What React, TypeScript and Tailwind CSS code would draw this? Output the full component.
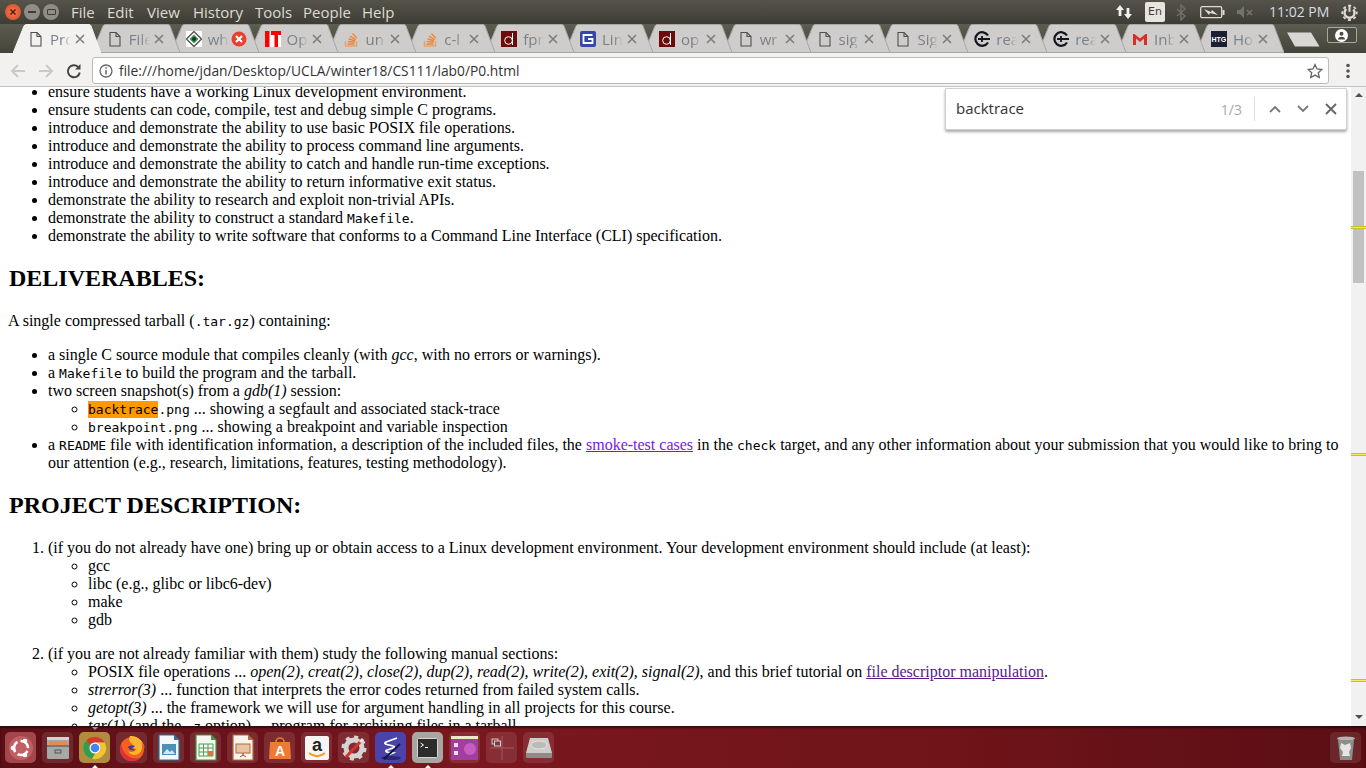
import React from "react";

const Doc = () => (
  <svg width="16" height="16" viewBox="0 0 16 16" fill="none" stroke="#4f4f4f" strokeWidth="1.100">
    <path d="M3 1.500h6l4 4v9.500H3z" />
    <path d="M9 1.500v4h4" />
  </svg>
);
const So = () => (
  <svg width="16" height="16" viewBox="0 0 16 16" fill="none" stroke="#f0883a" strokeWidth="1.500">
    <path d="M2.500 10v5h11v-5" stroke="#e0a679" />
    <path d="M4.500 13h7M4.800 10.500l6.800.8M5.500 7.800l6.500 2.200M7 5.200l5.800 3.600M9.500 2.500l4.300 4.800" />
  </svg>
);
const Wh = () => (
  <svg width="16" height="16" viewBox="0 0 16 16">
    <rect width="16" height="16" fill="#fff" />
    <path d="M8 .5 15.500 8 8 15.500.5 8z" fill="none" stroke="#555" strokeWidth="1.400" />
    <path d="M8 3.500 12.500 8 8 12.500 3.500 8z" fill="#3f8f5a" />
    <circle cx="8" cy="8" r="2" fill="#16391f" />
  </svg>
);
const CrashX = () => (
  <svg width="16" height="16" viewBox="0 0 16 16">
    <circle cx="8" cy="8" r="7.500" fill="#e8412d" />
    <path d="M5 5l6 6M11 5l-6 6" stroke="#fff" strokeWidth="2.200" />
  </svg>
);
const It = () => (
  <svg width="16" height="16" viewBox="0 0 16 16">
    <rect width="16" height="16" fill="#f00" />
    <rect x="4.500" y="0" width="1.500" height="16" fill="#fff" />
    <rect x="6" y="4" width="3.500" height="12" fill="#fff" />
    <rect x="13" y="4" width="3" height="12" fill="#fff" />
  </svg>
);
const Dd = () => (
  <svg width="16" height="16" viewBox="0 0 16 16">
    <rect width="16" height="16" fill="#6d0a0a" />
    <circle cx="7.500" cy="9.500" r="3.800" fill="none" stroke="#fff" strokeWidth="1" />
    <path d="M11.500 2v12" stroke="#fff" strokeWidth="1" />
  </svg>
);
const Lin = () => (
  <svg width="16" height="16" viewBox="0 0 16 16">
    <rect width="16" height="16" rx="2" fill="#3546a8" />
    <path d="M12.500 4h-9v8h9V8H8" fill="none" stroke="#fff" strokeWidth="1.800" />
  </svg>
);
const Rea = () => (
  <svg width="16" height="16" viewBox="0 0 16 16" fill="none" stroke="#15151f">
    <path d="M14 4.500A6.800 6.800 0 1 0 14 11.500" strokeWidth="2.200" />
    <path d="M4 8h12M8 5v6" strokeWidth="1.800" />
  </svg>
);
const Gm = () => (
  <svg width="16" height="16" viewBox="0 0 16 16">
    <path d="M1 3v11h3V7.500L8 11l4-3.500V14h3V3h-1.500L8 7.500 2.500 3z" fill="#d93025" />
  </svg>
);
const Htg = () => (
  <span className="flex h-4 w-4 items-center justify-center bg-[#1a1f33] font-['Liberation_Sans',sans-serif] text-[7px] font-bold leading-none text-white">
    HTG
  </span>
);

const tabs: { t: string; i: React.ReactNode }[] = [
  { t: "Pro", i: <Doc /> },
  { t: "File", i: <Doc /> },
  { t: "wh", i: <Wh /> },
  { t: "Op", i: <It /> },
  { t: "un", i: <So /> },
  { t: "c-l", i: <So /> },
  { t: "fpr", i: <Dd /> },
  { t: "Lin", i: <Lin /> },
  { t: "op", i: <Dd /> },
  { t: "wr", i: <Doc /> },
  { t: "sig", i: <Doc /> },
  { t: "Sig", i: <Doc /> },
  { t: "rea", i: <Rea /> },
  { t: "rea", i: <Rea /> },
  { t: "Inb", i: <Gm /> },
  { t: "Ho", i: <Htg /> },
];

function Tab({ t, i, idx }: { t: string; i: React.ReactNode; idx: number }) {
  const active = idx === 0;
  return (
    <div className="relative -mr-[9.15px] h-[29px] w-[88px] shrink-0" style={{ zIndex: 40 - idx }}>
      <svg className="absolute inset-0" width="88" height="29" viewBox="0 0 88 29">
        <path
          d={active ? "M0 29 L11 2 Q11.800 .5 13.500 .5 L76 .5 Q77.500 .5 78 2 L88 29" : "M0 28.500 L11 2 Q11.800 .5 13.500 .5 L76 .5 Q77.500 .5 78 2 L88 28.500 Z"}
          fill={active ? "#f2f1f0" : "#cfcdcb"}
          stroke={active ? "#f2f1f0" : "#a9a7a4"}
        />
      </svg>
      <div className="relative flex h-full items-center pl-[15px] pt-px">
        <span className="flex h-4 w-4 shrink-0 items-center justify-center">{i}</span>
        <span className="ml-[6px] w-[22px] overflow-hidden whitespace-nowrap text-[15px] leading-[18px] text-[#7a8086] [mask-image:linear-gradient(90deg,#000_55%,transparent_95%)]">
          {t}
        </span>
        {idx === 2 ? (
          <span className="ml-px">
            <CrashX />
          </span>
        ) : (
          <svg className="ml-[3px]" width="10" height="10" viewBox="0 0 10 10" stroke="#7b7b7b" strokeWidth="1.500">
            <path d="M1 1l8 8M9 1l-8 8" />
          </svg>
        )}
      </div>
    </div>
  );
}

const menu: [string, string][] = [
  ["File", "w-[36px]"],
  ["Edit", "w-[40px]"],
  ["View", "w-[46px]"],
  ["History", "w-[62px]"],
  ["Tools", "w-[48px]"],
  ["People", "w-[59px]"],
  ["Help", "w-[40px]"],
];

function Tile({ children, cls = "bg-white/10", pip, top }: { children: React.ReactNode; cls?: string; pip?: boolean; top?: boolean }) {
  return (
    <div className={`relative flex h-[31px] w-[31px] shrink-0 items-center justify-center rounded-[5px] ${cls}`}>
      {children}
      {pip && <span className="absolute -bottom-[5px] left-[13px] h-0 w-0 border-x-[3px] border-b-[3px] border-x-transparent border-b-white" />}
      {top && <span className="absolute -top-[5px] left-[13px] h-0 w-0 border-x-[3px] border-t-[3px] border-x-transparent border-t-[#999]" />}
    </div>
  );
}

const Mono = ({ children }: { children: React.ReactNode }) => (
  <code className="font-['DejaVu_Sans_Mono',monospace] text-[13px] leading-[0]">{children}</code>
);

const Mark = ({ cls }: { cls: string }) => (
  <div className={`absolute left-0 h-[3px] w-[15px] border-y border-[#c9bf1e] bg-[#f5ee5a] ${cls}`} />
);

export default function App() {
  return (
    <div className="flex h-screen w-screen flex-col overflow-hidden bg-white font-['Open_Sans','Noto_Sans',sans-serif]">
      {/* Ubuntu top panel */}
      <div className="flex h-[24px] shrink-0 items-center bg-[linear-gradient(#55534a,#3e3d35)] text-[14px] text-[#dfdbd2]">
        <div className="ml-[5px] flex items-center gap-[3px]">
          <span className="flex h-[16px] w-[16px] items-center justify-center rounded-full bg-[radial-gradient(#f27a53,#d9481d)]">
            <svg width="8" height="8" viewBox="0 0 8 8" stroke="#5a1c08" strokeWidth="1.500"><path d="M1.500 1.500l5 5M6.500 1.500l-5 5" /></svg>
          </span>
          <span className="flex h-[16px] w-[16px] items-center justify-center rounded-full bg-[#8f8d85]">
            <span className="h-[2px] w-[8px] bg-[#3e3d35]" />
          </span>
          <span className="flex h-[16px] w-[16px] items-center justify-center rounded-full bg-[#8f8d85]">
            <span className="h-[6px] w-[9px] rounded-[1px] border border-[#3e3d35]" />
          </span>
        </div>
        <div className="ml-[12px] flex">
          {menu.map(([m, w]) => (
            <span key={m} className={`${w} text-[15px] leading-none`}>{m}</span>
          ))}
        </div>
        <div className="ml-auto flex items-center">
          <svg width="18" height="18" viewBox="0 0 18 18" fill="#f2f1ef">
            <path d="M5 2 1 7h2.600v6h2.800V7H9zM13 16l4-5h-2.600V5h-2.800v6H9z" />
          </svg>
          <span className="ml-[12px] flex h-[20px] w-[20px] items-center justify-center rounded-[2px] bg-[#e8e5e0] font-['DejaVu_Sans',sans-serif] text-[11px] text-[#3c3b37]">En</span>
          <svg className="ml-[11px]" width="11" height="17" viewBox="0 0 11 17" fill="none" stroke="#6f6e66" strokeWidth="1.500">
            <path d="M1 5l8 7-4 4V1l4 4-8 7" />
          </svg>
          <svg className="ml-[13px]" width="25" height="13" viewBox="0 0 25 13">
            <rect x=".7" y=".7" width="21" height="11" rx="1.500" fill="none" stroke="#dfdbd2" strokeWidth="1.300" />
            <rect x="22.500" y="4" width="2" height="5" fill="#dfdbd2" />
            <path d="M4 3l7 3 1-2 6 5-8-2-1 2z" fill="#dfdbd2" />
          </svg>
          <svg className="ml-[12px]" width="17" height="12" viewBox="0 0 17 12" fill="#75746c">
            <path d="M0 4h3l4-4v12L3 8H0z" />
            <path d="M10 4l5 5M15 4l-5 5" stroke="#75746c" strokeWidth="1.500" />
          </svg>
          <span className="ml-[15px] w-[60px] whitespace-nowrap text-[14px] leading-none text-[#d8dde0]">11:02 PM</span>
          <svg className="ml-[12px] mr-[8px]" width="17" height="17" viewBox="0 0 17 17" fill="none" stroke="#dfdbd2">
            <circle cx="8.500" cy="8.800" r="5" strokeWidth="2.400" strokeDasharray="23 8.400" strokeDashoffset="-4.200" transform="rotate(-90 8.500 8.800)" />
            <circle cx="8.500" cy="8.800" r="7.200" strokeWidth="1.800" strokeDasharray="3 2.650" strokeDashoffset="1.500" />
            <path d="M8.500 .8v7" strokeWidth="2" />
          </svg>
        </div>
      </div>

      {/* Tab strip */}
      <div className="flex h-[29px] shrink-0 bg-[linear-gradient(#5d5c50,#45443a)] pl-[13px]">
        {tabs.map((x, idx) => (
          <Tab key={idx} t={x.t} i={x.i} idx={idx} />
        ))}
        <svg className="ml-[12px] mt-[8px] shrink-0" width="33" height="15" viewBox="0 0 33 15">
          <path d="M0 .5h24l8.500 14H8z" fill="#d9d7d4" />
        </svg>
        <div className="ml-[7px] mt-[3px] flex h-[16px] w-[30px] items-center justify-center rounded-[2px] border border-[#a9a89f] bg-[#4c4b41]">
          <svg width="13" height="13" viewBox="0 0 13 13" fill="#fff">
            <circle cx="6.500" cy="6.500" r="6.500" />
            <circle cx="6.500" cy="4.800" r="2" fill="#4c4b41" />
            <path d="M2.800 10.500c.5-2 2-2.700 3.700-2.700s3.200.7 3.700 2.700z" fill="#4c4b41" />
          </svg>
        </div>
      </div>

      {/* Toolbar */}
      <div className="flex h-[34px] shrink-0 items-center border-b border-[#c4c2bf] bg-[#f2f1f0] pb-[2px] pt-[4px]">
        <svg className="ml-[10px]" width="16" height="16" viewBox="0 0 16 16" fill="none" stroke="#cbcac8" strokeWidth="2"><path d="M15 8H2M8 2 2 8l6 6" /></svg>
        <svg className="ml-[12px]" width="16" height="16" viewBox="0 0 16 16" fill="none" stroke="#cbcac8" strokeWidth="2"><path d="M1 8h13M8 2l6 6-6 6" /></svg>
        <svg className="ml-[12px]" width="16" height="16" viewBox="0 0 16 16" fill="none" stroke="#444" strokeWidth="2"><path d="M13.800 9.500A6 6 0 1 1 12 3.800" /><path d="M14.500 1v5.500H9" fill="#444" stroke="none" /></svg>
        <div className="ml-[10px] flex h-[27px] w-[1237px] items-center rounded-[3px] border border-[#bdbbb8] bg-white">
          <svg className="ml-[6px]" width="14" height="14" viewBox="0 0 14 14" fill="none" stroke="#666" strokeWidth="1.300">
            <circle cx="7" cy="7" r="6" />
            <path d="M7 6v4.500M7 3.300v1.400" strokeWidth="1.500" />
          </svg>
          <span className="ml-[6px] whitespace-nowrap text-[13.800px] leading-[18px] text-[#333]">file:///home/jdan/Desktop/UCLA/winter18/CS111/lab0/P0.html</span>
          <svg className="ml-auto mr-[5px]" width="16" height="16" viewBox="0 0 16 16" fill="none" stroke="#666" strokeWidth="1.300">
            <path d="M8 1.500l2 4.400 4.800.6-3.500 3.200.9 4.800L8 12.100l-4.200 2.400.9-4.800L1.200 6.500 6 5.900z" />
          </svg>
        </div>
        <svg className="ml-[17px]" width="4" height="16" viewBox="0 0 4 16" fill="#555">
          <circle cx="2" cy="2.500" r="1.800" /><circle cx="2" cy="8" r="1.800" /><circle cx="2" cy="13.500" r="1.800" />
        </svg>
      </div>

      {/* Page */}
      <div className="relative flex min-h-0 flex-1 overflow-hidden">
        <div className="h-full w-[1351px] shrink-0 overflow-hidden px-2 font-['Liberation_Serif',serif] text-[16px] leading-[18px] text-black">
          <ul className="-mt-[4px] list-disc pl-10">
            <li>ensure students have a working Linux development environment.</li>
            <li>ensure students can code, compile, test and debug simple C programs.</li>
            <li>introduce and demonstrate the ability to use basic POSIX file operations.</li>
            <li>introduce and demonstrate the ability to process command line arguments.</li>
            <li>introduce and demonstrate the ability to catch and handle run-time exceptions.</li>
            <li>introduce and demonstrate the ability to return informative exit status.</li>
            <li>demonstrate the ability to research and exploit non-trivial APIs.</li>
            <li>demonstrate the ability to construct a standard <Mono>Makefile</Mono>.</li>
            <li>demonstrate the ability to write software that conforms to a Command Line Interface (CLI) specification.</li>
          </ul>
          <h2 className="my-[19.920px] ml-px text-[24px] font-bold leading-[27px]">DELIVERABLES:</h2>
          <p className="my-4">A single compressed tarball (<Mono>.tar.gz</Mono>) containing:</p>
          <ul className="my-4 list-disc pl-10">
            <li>a single C source module that compiles cleanly (with <i>gcc</i>, with no errors or warnings).</li>
            <li>a <Mono>Makefile</Mono> to build the program and the tarball.</li>
            <li>two screen snapshot(s) from a <i>gdb(1)</i> session:
              <ul className="list-[circle] pl-10">
                <li><Mono><span className="bg-[#ff9900] py-[1px]">backtrace</span>.png</Mono> ... showing a segfault and associated stack-trace</li>
                <li><Mono>breakpoint.png</Mono> ... showing a breakpoint and variable inspection</li>
              </ul>
            </li>
            <li>a <Mono>README</Mono> file with identification information, a description of the included files, the <a className="text-[#7a16ea] underline">smoke-test cases</a> in the <Mono>check</Mono> target, and any other information about your submission that you would like to bring to our attention (e.g., research, limitations, features, testing methodology).</li>
          </ul>
          <h2 className="my-[19.920px] ml-px text-[24px] font-bold leading-[27px]">PROJECT DESCRIPTION:</h2>
          <ol className="my-4 list-decimal pl-10">
            <li>(if you do not already have one) bring up or obtain access to a Linux development environment. Your development environment should include (at least):
              <ul className="list-[circle] pl-10">
                <li>gcc</li>
                <li>libc (e.g., glibc or libc6-dev)</li>
                <li>make</li>
                <li>gdb</li>
              </ul>
            </li>
            <li className="mt-4">(if you are not already familiar with them) study the following manual sections:
              <ul className="list-[circle] pl-10">
                <li>POSIX file operations ... <i>open(2), creat(2), close(2), dup(2), read(2), write(2), exit(2), signal(2)</i>, and this brief tutorial on <a className="text-[#551a8b] underline">file descriptor manipulation</a>.</li>
                <li><i>strerror(3)</i> ... function that interprets the error codes returned from failed system calls.</li>
                <li><i>getopt(3)</i> ... the framework we will use for argument handling in all projects for this course.</li>
                <li><i>tar(1)</i> (and the <Mono>-z</Mono> option) ... program for archiving files in a tarball.</li>
              </ul>
            </li>
          </ol>
        </div>

        {/* Scrollbar */}
        <div className="relative flex h-full w-[15px] shrink-0 flex-col items-center bg-[#f1f1f1]">
          <span className="mt-[6px] h-0 w-0 border-x-[4px] border-b-[4px] border-x-transparent border-b-[#505050]" />
          <div className="mt-[74px] h-[112px] w-[11px] bg-[#c1c1c1]" />
          <span className="mt-auto mb-[7px] h-0 w-0 border-x-[4px] border-t-[4px] border-x-transparent border-t-[#505050]" />
          <Mark cls="top-[139px]" />
          <Mark cls="top-[366px]" />
          <Mark cls="top-[592px]" />
        </div>

        {/* Find bar */}
        <div className="absolute left-[945px] top-px flex h-[42px] w-[402px] items-center rounded-b-[2px] border border-[#d0d0d0] bg-white pl-[10px] shadow-[0_2px_3px_rgba(0,0,0,0.35)]">
          <span className="pb-[2px] text-[15px] text-[#333]">backtrace</span>
          <span className="ml-auto text-[14px] text-[#a8a8a8]">1/3</span>
          <span className="ml-[12px] h-[24px] w-px bg-[#dedede]" />
          <svg className="ml-[14px]" width="12" height="8" viewBox="0 0 12 8" fill="none" stroke="#777" strokeWidth="1.800"><path d="M1 7l5-5 5 5" /></svg>
          <svg className="ml-[16px]" width="12" height="8" viewBox="0 0 12 8" fill="none" stroke="#777" strokeWidth="1.800"><path d="M1 1l5 5 5-5" /></svg>
          <svg className="ml-[16px] mr-[9px]" width="12" height="12" viewBox="0 0 12 12" fill="none" stroke="#666" strokeWidth="1.900"><path d="M1 1l10 10M11 1L1 11" /></svg>
        </div>
      </div>

      {/* Unity launcher */}
      <div className="relative flex h-[42px] shrink-0 items-start gap-[6px] bg-[linear-gradient(90deg,#5c0f16,#7a171e_35%,#6f1419_70%,#5a0e14)] pl-[5px] pt-[6px] shadow-[inset_0_2px_2px_rgba(0,0,0,0.5)]">
        <Tile cls="bg-[#a4474c]">
          <svg width="26" height="26" viewBox="0 0 26 26">
            <circle cx="13" cy="13" r="12" fill="#c06064" />
            <circle cx="13" cy="13" r="7" fill="none" stroke="#fff" strokeWidth="2.600" strokeDasharray="11.500 3.160" strokeDashoffset="-1.500" transform="rotate(12 13 13)" />
            <circle cx="5" cy="13" r="2.300" fill="#fff" /><circle cx="17" cy="6" r="2.300" fill="#fff" /><circle cx="17" cy="20" r="2.300" fill="#fff" />
          </svg>
        </Tile>
        <Tile>
          <svg width="26" height="26" viewBox="0 0 26 26">
            <rect x="2" y="2" width="22" height="22" rx="1.500" fill="#a8a8a4" />
            <rect x="2" y="2" width="22" height="3" fill="#d5d3cf" />
            <rect x="4" y="6" width="18" height="4" fill="#e88b4a" />
            <rect x="2" y="10" width="22" height="2" fill="#777" />
            <rect x="10" y="15" width="6" height="3" fill="none" stroke="#555" />
          </svg>
        </Tile>
        <Tile cls="bg-[#b08c3e]" pip top>
          <svg width="26" height="26" viewBox="0 0 26 26">
            <path d="M13 2a11 11 0 0 1 9.500 5.500H13a5.500 5.500 0 0 0-5 3L4.500 5.300A11 11 0 0 1 13 2z" fill="#d8382e" />
            <path d="M4.500 5.300 8 10.500a5.500 5.500 0 0 0 5 8l-3 5.200A11 11 0 0 1 4.500 5.300z" fill="#2f9e4f" />
            <path d="M22.500 7.500A11 11 0 0 1 10 23.700l3.300-5.200A5.500 5.500 0 0 0 17.800 10l-4.800-2.500z" fill="#f3c331" />
            <circle cx="13" cy="13" r="5.500" fill="#fff" />
            <circle cx="13" cy="13" r="4.300" fill="#4285f4" />
          </svg>
        </Tile>
        <Tile>
          <svg width="28" height="28" viewBox="0 0 28 28">
            <circle cx="14" cy="15" r="12" fill="#f4611f" />
            <path d="M3 10a12 12 0 0 0 19 14C13 26 5 21 3 10z" fill="#e02f3c" />
            <path d="M12 2c7-1 14 5 15 13-1-3-2-5-4-7 2 5 1 10-3 12-3 2-8 1-10-3 3 2 7 1 8-2-2-2-6-1-7-3 2 0 3-1 4-2-3-1-5-4-3-8z" fill="#ffb52e" />
            <path d="M10 13c2-2 5-2 7-1-1 1-2 2-4 2 1 1 3 1 4 2-2 1-5 1-7-3z" fill="#3d3a96" />
          </svg>
        </Tile>
        <Tile>
          <svg width="24" height="27" viewBox="0 0 24 27">
            <path d="M2 1h15l5 5v20H2z" fill="#f4f6f7" stroke="#2f6f9f" strokeWidth="1.200" />
            <path d="M17 1l5 5h-5z" fill="#2f6f9f" />
            <rect x="5" y="10" width="14" height="11" fill="#4a90b8" />
            <path d="M6 20l4-5 3 3 2-2 3 4z" fill="#d9e6ee" />
          </svg>
        </Tile>
        <Tile>
          <svg width="24" height="27" viewBox="0 0 24 27">
            <path d="M2 1h15l5 5v20H2z" fill="#f4f7f2" stroke="#3e9a45" strokeWidth="1.200" />
            <path d="M17 1l5 5h-5z" fill="#3e9a45" />
            <path d="M5 10h14v12H5zM5 14h14M5 18h14M9.500 10v12M14 10v12" fill="none" stroke="#4ea155" />
            <rect x="14" y="17" width="5" height="5" fill="#d27a3c" />
          </svg>
        </Tile>
        <Tile>
          <svg width="24" height="27" viewBox="0 0 24 27">
            <path d="M2 1h15l5 5v20H2z" fill="#f8f3ef" stroke="#b56a3a" strokeWidth="1.200" />
            <path d="M17 1l5 5h-5z" fill="#b56a3a" />
            <rect x="5" y="10" width="14" height="9" fill="#e9c3a6" stroke="#b56a3a" />
            <path d="M12 19v3M9 23l3-2 3 2" stroke="#8a5a3a" fill="none" />
          </svg>
        </Tile>
        <Tile>
          <svg width="26" height="26" viewBox="0 0 26 26">
            <path d="M9 7a4 4 0 0 1 8 0" fill="none" stroke="#e8783a" strokeWidth="1.600" />
            <path d="M3 7h20l1 17H2z" fill="#ee7a35" />
            <text x="13" y="21" textAnchor="middle" fontSize="14" fontWeight="700" fontFamily="'Liberation Sans',sans-serif" fill="#fff">A</text>
          </svg>
        </Tile>
        <Tile>
          <svg width="24" height="24" viewBox="0 0 24 24">
            <rect width="24" height="24" rx="2" fill="#f6f5f3" />
            <text x="12" y="15" textAnchor="middle" fontSize="18" fontWeight="700" fontFamily="'Liberation Sans',sans-serif" fill="#222">a</text>
            <path d="M4 17c5 4 11 4 16 0" fill="none" stroke="#f49a1c" strokeWidth="1.800" />
          </svg>
        </Tile>
        <Tile>
          <svg width="26" height="26" viewBox="0 0 26 26">
            <circle cx="13" cy="13" r="8" fill="none" stroke="#d6d4d0" strokeWidth="5" />
            <circle cx="13" cy="13" r="11" fill="none" stroke="#d6d4d0" strokeWidth="3" strokeDasharray="4 4.600" />
            <path d="M5 22L20 6" stroke="#d8302c" strokeWidth="3" />
            <path d="M19 7l3-3" stroke="#e8e6e2" strokeWidth="3" />
          </svg>
        </Tile>
        <Tile cls="bg-[#4a43ac]" pip>
          <svg width="26" height="26" viewBox="0 0 26 26" fill="none">
            <ellipse cx="13" cy="23" rx="10" ry="2" fill="#2b2670" />
            <path d="M19 3 8 7c-2 1-1 2 1 2.500l6 1.500c2 .5 2 1.500 0 2l-6 2c-2 .7-1 2 1 2.300l5 .7-5 2" stroke="#fff" strokeWidth="1.800" />
            <path d="M6 24 22 9" stroke="#15123f" strokeWidth="1.800" />
          </svg>
        </Tile>
        <Tile cls="bg-[#a8a5a3]" pip>
          <svg width="21" height="20" viewBox="0 0 21 20">
            <rect x=".5" y=".5" width="20" height="19" rx="1" fill="#2c2c2c" stroke="#d7d5d2" />
            <path d="M3.500 5l3 2-3 2" fill="none" stroke="#fff" />
            <path d="M8 9.500h3" stroke="#fff" />
          </svg>
        </Tile>
        <Tile>
          <svg width="27" height="24" viewBox="0 0 27 24">
            <rect width="27" height="24" rx="1" fill="#a23f9c" />
            <rect width="27" height="3" fill="#eee7cf" />
            <rect x="3" y="7" width="4" height="4" fill="#f2dff0" />
            <rect x="3" y="15" width="4" height="4" fill="#f2dff0" />
            <circle cx="19" cy="13" r="6" fill="#c65cc0" />
          </svg>
        </Tile>
        <Tile>
          <svg width="27" height="27" viewBox="0 0 27 27" fill="none">
            <path d="M14 2v24M2 14h24" stroke="#a3595d" />
            <rect x="4" y="5" width="6" height="5" stroke="#cfcfcf" />
            <rect x="6.500" y="7" width="6" height="5" fill="#7a3a3e" stroke="#cfcfcf" />
          </svg>
        </Tile>
        <Tile>
          <svg width="28" height="24" viewBox="0 0 28 24">
            <path d="M5 2h18l4 15H1z" fill="#cfcdca" />
            <path d="M1 17h26v4a1 1 0 0 1-1 1H2a1 1 0 0 1-1-1z" fill="#8e8c88" />
            <ellipse cx="14" cy="9" rx="8" ry="4" fill="#bdbbb7" stroke="#e4e2df" />
          </svg>
        </Tile>
        <div className="ml-auto mr-[5px]">
          <Tile>
            <svg width="22" height="26" viewBox="0 0 22 26">
              <ellipse cx="11" cy="3.500" rx="9" ry="2" fill="#b5b3b0" />
              <path d="M3 5h16l-2 20H5z" fill="#8f8d8a" />
              <path d="M6 8l4 2 5-2 1 5-2 4 1 4H7l1-4-3-4z" fill="#e6e5e3" />
            </svg>
          </Tile>
        </div>
      </div>
    </div>
  );
}
